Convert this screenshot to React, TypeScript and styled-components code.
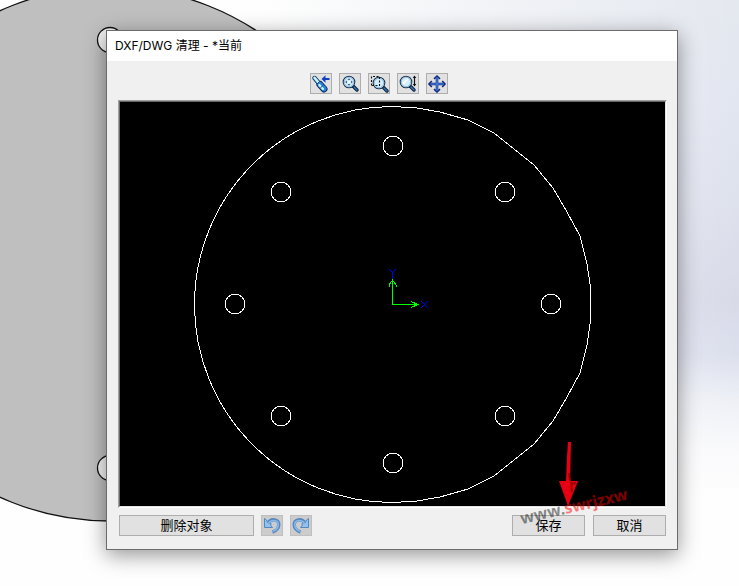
import React from "react";
import styled, { createGlobalStyle } from "styled-components";

const GlobalStyle = createGlobalStyle`
  *, *::before, *::after { box-sizing: border-box; }
  body {
    margin: 0;
    background: #fefefe;
    color: #000;
    font-family: "Inter", "Noto Sans CJK SC", sans-serif;
    font-size: 12px;
  }
`;

const Scene = styled.main`
  position: relative;
  min-height: 100vh;
  padding: 30px 61px 36px 106px;
  overflow: hidden;
  background:
    linear-gradient(to right, #fefefe 35%, rgba(254, 254, 254, 0) 100%),
    linear-gradient(
      to bottom,
      #e4e8ef 0,
      #e2e6f0 100px,
      #dee2ed 200px,
      #d8dae8 300px,
      #dce0ed 355px,
      #eef0f6 400px,
      #fafafc 450px,
      #fefefe 500px
    );
`;

const ModelBackdrop = styled.svg`
  position: absolute;
  top: 0;
  left: 0;
`;

const Dialog = styled.section`
  position: relative;
  display: flex;
  flex-direction: column;
  border: 1px solid #6b6b6b;
  background: #f0f0f0;
  box-shadow: 0 5px 20px rgba(0, 0, 0, 0.42);
`;

const TitleBar = styled.header`
  display: flex;
  align-items: center;
  height: 30px;
  padding: 0 8px;
  background: #fff;
`;

const Title = styled.h1`
  margin: 0;
  font-size: 12px;
  line-height: 18px;
  font-weight: 400;
`;

const Toolbar = styled.div`
  display: flex;
  justify-content: center;
  gap: 7px;
  padding: 12px 26px 6px 0;
`;

const IconButton = styled.button<{ $muted?: boolean }>`
  display: flex;
  width: 22px;
  height: 21px;
  padding: 0;
  border: 1px solid ${(p) => (p.$muted ? "#bfbfbf" : "#adadad")};
  background: ${(p) => (p.$muted ? "#cccccc" : "#e1e1e1")};

  svg { display: block; }
`;

const Viewport = styled.div`
  margin: 0 10px 0 11px;
  border: 1px solid;
  border-color: #a0a0a0 #fff #fff #a0a0a0;
`;

const ViewportBevel = styled.div`
  border: 1px solid;
  border-color: #696969 #e3e3e3 #e3e3e3 #696969;
  background: #000;
`;

const Drawing = styled.svg`
  display: block;
  width: 100%;
  height: auto;
`;

const Footer = styled.footer`
  display: flex;
  justify-content: space-between;
  padding: 7px 11px 13px 12px;
`;

const ButtonGroup = styled.div<{ $gap: number }>`
  display: flex;
  gap: ${(p) => p.$gap}px;
`;

const PushButton = styled.button<{ $wide?: boolean }>`
  width: ${(p) => (p.$wide ? 135 : 73)}px;
  height: 21px;
  padding: 0 0 2px;
  border: 1px solid #adadad;
  background: #e1e1e1;
  color: #000;
  font-family: "Noto Sans CJK SC", sans-serif;
  font-size: 13px;
  line-height: 17px;
`;

const Watermark = styled.span`
  position: absolute;
  right: 49px;
  bottom: 31px;
  font-family: "Noto Sans", sans-serif;
  font-size: 16px;
  line-height: 24px;
  font-weight: 700;
  color: rgba(0, 0, 0, 0.45);
  transform: rotate(-13deg);
  pointer-events: none;

  em {
    font-style: normal;
    color: rgba(255, 0, 0, 0.5);
  }
`;

const HOLES: [number, number][] = [
  [273, 44], [385, 90], [431, 202], [385, 314],
  [273, 361], [161, 314], [115, 202], [161, 90],
];

function Lens({ cx, cy }: { cx: number; cy: number }) {
  return (
    <>
      <path d={`M${cx + 4} ${cy + 4} L${cx + 8} ${cy + 8}`} stroke="#0c1c3c" strokeWidth="3.4" strokeLinecap="round" />
      <path d={`M${cx + 5} ${cy + 5} L${cx + 8} ${cy + 8}`} stroke="#2f7cb8" strokeWidth="1.4" strokeLinecap="round" />
      <circle cx={cx} cy={cy} r="5.8" fill="#d2edfc" stroke="#20334f" strokeWidth="1.1" />
      <circle cx={cx} cy={cy} r="4.7" fill="none" stroke="#8dbde2" strokeWidth="1" />
    </>
  );
}

function Icon({ children }: { children: React.ReactNode }) {
  return (
    <svg width="20" height="19" viewBox="1 1 20 19" fill="none" aria-hidden="true">
      {children}
    </svg>
  );
}

const PreviousIcon = () => (
  <Icon>
    <path d="M4.5 5 L9.5 11" stroke="#0c2a58" strokeWidth="4.4" strokeLinecap="round" />
    <path d="M10 11.5 L14 16" stroke="#0c2a58" strokeWidth="7" strokeLinecap="round" />
    <path d="M4.5 5 L9.5 11" stroke="#4cabe4" strokeWidth="2.8" strokeLinecap="round" />
    <path d="M10 11.5 L14 15.8" stroke="#2a86dc" strokeWidth="5.2" strokeLinecap="round" />
    <path d="M4.5 4.6 L8 9 M9.3 12 L13 16" stroke="#c9f3ff" strokeWidth="2.2" strokeLinecap="round" />
    <path d="M7 11 L10 8 M10.5 15 L14 11" stroke="#164b96" strokeWidth="1" />
    <path d="M11.5 6 L15.5 2.2 V5 H19.5 V7 H15.5 V9.8 Z" fill="#123fbd" />
  </Icon>
);

const ZoomFitIcon = () => (
  <Icon>
    <Lens cx={10} cy={9} />
    <path d="M10 5.2 L11.5 7 H8.5 Z M10 12.8 L11.5 11 H8.5 Z M6.2 9 L8 7.5 V10.5 Z M13.8 9 L12 7.5 V10.5 Z" fill="#3a628f" />
    <rect x="9" y="8" width="2" height="2" fill="#fff" />
  </Icon>
);

const ZoomAreaIcon = () => (
  <Icon>
    <Lens cx={11} cy={10} />
    <path d="M3.5 12.5 V3.5 H11.5 V12.5 H3.5" stroke="#111" strokeWidth="1.1" strokeDasharray="2 1.5" />
  </Icon>
);

const ZoomInOutIcon = () => (
  <Icon>
    <Lens cx={9} cy={9} />
    <path d="M6 11 L11 6" stroke="#fff" strokeWidth="1.8" />
    <path d="M17.5 4 V12" stroke="#111" strokeWidth="1.2" />
    <path d="M17.5 2.5 L19.3 5 H15.7 Z M17.5 13.5 L19.3 11 H15.7 Z" fill="#111" />
  </Icon>
);

const PanIcon = () => (
  <Icon>
    <path d="M11 4 V18 M4 11 H18" stroke="#14287c" strokeWidth="2.6" />
    <path
      d="M8 5.8 L11 3 L14 5.8 M8 16.2 L11 19 L14 16.2 M5.8 8 L3 11 L5.8 14 M16.2 8 L19 11 L16.2 14"
      stroke="#14287c"
      strokeWidth="1.6"
    />
    <path d="M11 4 V18 M4 11 H18" stroke="#4a90f5" strokeWidth="1.2" />
  </Icon>
);

const UndoShape = () => (
  <>
    <path d="M7.5 7.5 C10 3.5 17.6 3.8 17.8 9.5 C17.8 13 15 16 11.5 17" stroke="#5686bd" strokeWidth="3.4" />
    <path d="M3.5 3.5 V12.5 H11.5 L9.6 10.2 L10 8 L7 8 L5.5 5 Z" fill="#8fc2f0" stroke="#5686bd" strokeWidth="1" />
    <path d="M7.5 8.3 C10 4.3 17 4.4 17.3 9.5 C17.3 12.5 15 15 12 16.4" stroke="#87baec" strokeWidth="1.6" />
  </>
);

const UndoIcon = () => <Icon><UndoShape /></Icon>;
const RedoIcon = () => (
  <Icon><g transform="translate(22 0) scale(-1 1)"><UndoShape /></g></Icon>
);

export default function App() {
  return (
    <>
      <GlobalStyle />
      <Scene>
        <ModelBackdrop width="400" height="540" viewBox="0 0 400 540" aria-hidden="true">
          <circle cx="110" cy="254" r="267" fill="#bfbfbf" stroke="#111" strokeWidth="1.3" />
          <circle cx="110" cy="40" r="12.5" fill="#f1f1f1" stroke="#111" strokeWidth="1.3" />
          <circle cx="110" cy="468" r="12.5" fill="#f1f1f1" stroke="#111" strokeWidth="1.3" />
        </ModelBackdrop>

        <Dialog role="dialog" aria-labelledby="dialog-title">
          <TitleBar>
            <Title id="dialog-title">DXF/DWG 清理 - *当前</Title>
          </TitleBar>

          <Toolbar role="toolbar">
            <IconButton type="button" aria-label="上一视图"><PreviousIcon /></IconButton>
            <IconButton type="button" aria-label="整屏显示"><ZoomFitIcon /></IconButton>
            <IconButton type="button" aria-label="局部放大"><ZoomAreaIcon /></IconButton>
            <IconButton type="button" aria-label="放大或缩小"><ZoomInOutIcon /></IconButton>
            <IconButton type="button" aria-label="平移"><PanIcon /></IconButton>
          </Toolbar>

          <Viewport>
            <ViewportBevel>
              <Drawing viewBox="0 0 545 404" fill="none">
                <g shapeRendering="crispEdges" stroke="#fff">
                  <path d="M272.5 4.5 L297 6 L320 10 L348 18 L374 31 L414 63 L433 86 L447 110 L460 134 L467 162 L470.5 185 V219 L467 243 L460 271 L447 295 L433 319 L414 342 L374 374 L348 387 L320 395 L297 399 L272.5 400.5 A198 198 0 0 1 272.5 4.5 Z" />
                  {HOLES.map(([x, y]) => (
                    <path
                      key={`${x}-${y}`}
                      transform={`translate(${x} ${y})`}
                      d="M-3 -9.5 H3 L7 -7 L9.5 -3 V3 L7 7 L3 9.5 H-3 L-7 7 L-9.5 3 V-3 L-7 -7 Z"
                    />
                  ))}
                </g>
                <g shapeRendering="crispEdges">
                  <path d="M272.5 178 V202.5 H298 M269 185 V183 L272.5 178 L276 183 V185 M291 199.5 L298 202.5 L291 205.5" stroke="#0f0" />
                  <path d="M269 167 L272.5 170.5 L276 167 M272.5 170 V177 M301 199 L308 206 M308 199 L301 206" stroke="#00f" />
                </g>
                <path d="M448 340 H451 L450 379 H458 L448 404 L439 379 H446 L447 354 Z" fill="#e60012" />
                <path d="M449 371 L450 379 M451 380 L452 390 M451 382 L456 381" stroke="#900" strokeWidth="2" />
              </Drawing>
            </ViewportBevel>
          </Viewport>

          <Footer>
            <ButtonGroup $gap={7}>
              <PushButton type="button" $wide>删除对象</PushButton>
              <IconButton type="button" $muted aria-label="撤销"><UndoIcon /></IconButton>
              <IconButton type="button" $muted aria-label="重做"><RedoIcon /></IconButton>
            </ButtonGroup>
            <ButtonGroup $gap={8}>
              <PushButton type="button">保存</PushButton>
              <PushButton type="button">取消</PushButton>
            </ButtonGroup>
          </Footer>

          <Watermark>www.<em>swrjzxw</em></Watermark>
        </Dialog>
      </Scene>
    </>
  );
}
